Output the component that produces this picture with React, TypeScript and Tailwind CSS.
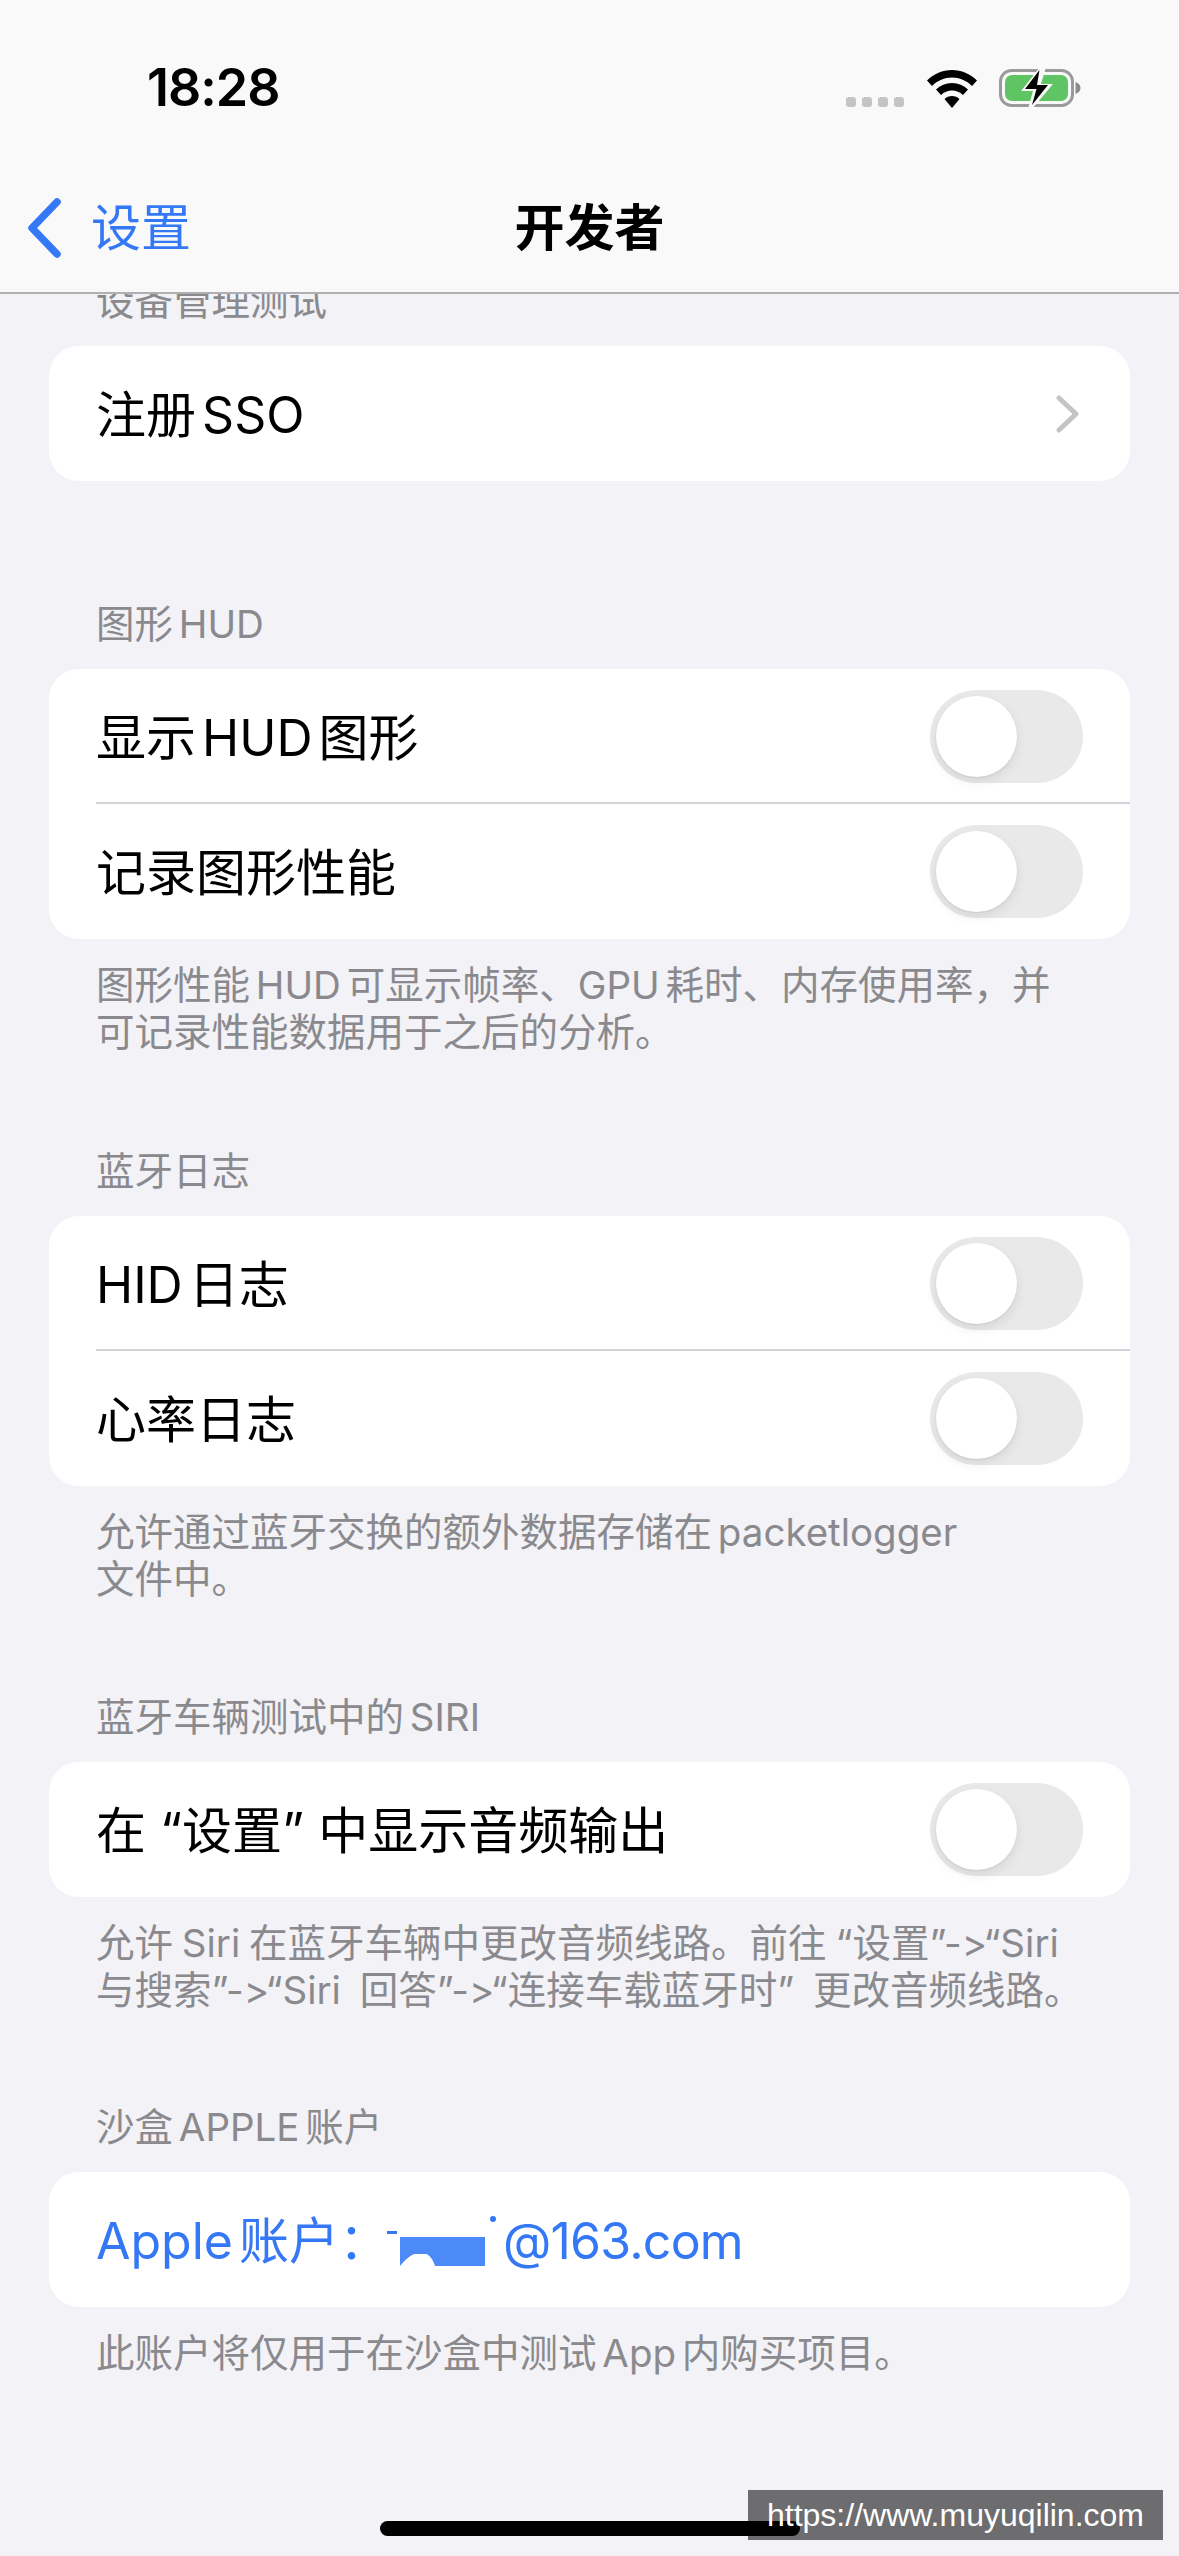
import * as React from "react";

const Toggle = () => (
  <div className="w-[153px] h-[93px] rounded-full bg-[#e9e9ea] p-[6px] shrink-0">
    <div className="w-[81px] h-[81px] rounded-full bg-white shadow-[0_5px_12px_rgba(0,0,0,0.08),0_1px_2px_rgba(0,0,0,0.08)]" />
  </div>
);

const Row = ({ label, divider }: { label: React.ReactNode; divider?: boolean }) => (
  <div className="h-[135px] pl-[47px] pr-[47px] flex items-center justify-between relative">
    <span className="pt-[3px] text-[50px] leading-none text-black [word-spacing:-8px]">{label}</span>
    <Toggle />
    {divider && <div className="absolute left-[47px] right-0 bottom-0 h-[2px] bg-[#d4d4d6]" />}
  </div>
);

const Header = ({ children }: { children: React.ReactNode }) => (
  <div className="px-[96px] pb-[21px] text-[38.5px] leading-[47px] text-[#8a8a8e] [word-spacing:-5px]">{children}</div>
);

const Footer = ({ children }: { children: React.ReactNode }) => (
  <div className="px-[96px] pt-[23px] text-[38.5px] leading-[47px] text-[#8a8a8e] whitespace-nowrap [word-spacing:-5px] [font-variant-ligatures:none] [font-feature-settings:'calt'_0]">
    {children}
  </div>
);

const Card = ({ children }: { children: React.ReactNode }) => (
  <div className="mx-[49px] rounded-[30px] bg-white overflow-hidden">{children}</div>
);

const StatusIcons = () => (
  <div className="flex items-end">
    <div className="flex gap-[6px] mb-[2px] mr-[23px]">
      <div className="w-[10px] h-[10px] rounded-[3px] bg-[#c4c4c4]" />
      <div className="w-[10px] h-[10px] rounded-[3px] bg-[#c4c4c4]" />
      <div className="w-[10px] h-[10px] rounded-[3px] bg-[#c4c4c4]" />
      <div className="w-[10px] h-[10px] rounded-[3px] bg-[#c4c4c4]" />
    </div>
    <svg width="50" height="38" viewBox="0 0 50 38" className="mb-[1px] mr-[22px]">
      <path d="M25 0C15.500 0 7 3.700 0 10.500l5 5.500C10.500 10.500 17.500 7.500 25 7.500s14.500 3 20 8.500l5-5.500C43 3.700 34.500 0 25 0z" fill="#000" />
      <path d="M25 13c-6.300 0-11.700 2.300-16 6.500l5 5.500c3-3 6.800-4.500 11-4.500s8 1.500 11 4.500l5-5.500C36.700 15.300 31.300 13 25 13z" fill="#000" />
      <path d="M25 26c-3 0-5.500 1-7.500 3L25 38l7.500-9c-2-2-4.500-3-7.500-3z" fill="#000" />
    </svg>
    <svg width="82" height="42" viewBox="0 0 82 42">
      <rect x="1.500" y="3.500" width="72" height="35" rx="11" fill="none" stroke="#9a9a9a" strokeWidth="3" />
      <rect x="6" y="8" width="63" height="26" rx="7" fill="#5fc463" />
      <path d="M76.500 15c3 1 5 3.200 5 6s-2 5-5 6z" fill="#8c8c8c" />
      <path d="M41 0L22 24h12l-5 18 4 0 21-25H42l5-17z" fill="#f9f9f9" />
      <path d="M40.500 3L26 22h11.500l-4.500 16 16-20H38z" fill="#000" />
    </svg>
  </div>
);

export default function App() {
  return (
    <div className="relative h-[2556px] w-[1179px] overflow-hidden bg-[#f2f2f7] font-['Inter','Noto_Sans_CJK_SC',sans-serif]">
      <div className="h-[294px] bg-[#f9f9f9] border-b-2 border-[#b0b0b2]">
        <div className="h-[176px] pl-[147px] pr-[98px] flex items-center justify-between">
          <span className="text-[52px] font-semibold leading-none text-black tracking-[-1px]">18:28</span>
          <StatusIcons />
        </div>
        <div className="h-[104px] grid grid-cols-[1fr_auto_1fr] items-center">
          <div className="flex items-center pl-[26px] text-[#3478f6]">
            <svg width="38" height="60" viewBox="0 0 38 60" className="mr-[27px]">
              <path d="M31 4L6 30l25 26" fill="none" stroke="#3478f6" strokeWidth="7.500" strokeLinecap="round" strokeLinejoin="round" />
            </svg>
            <span className="text-[50px] leading-none">设置</span>
          </div>
          <span className="text-[50px] font-semibold leading-none text-black">开发者</span>
          <div />
        </div>
      </div>

      <main className="h-[2262px] overflow-hidden">
        <div className="-mt-[16px]">
          <Header>设备管理测试</Header>
          <Card>
            <div className="h-[135px] pl-[47px] pr-[50px] flex items-center justify-between">
              <span className="pt-[3px] text-[50px] leading-none text-black [word-spacing:-8px]">注册 SSO</span>
              <svg width="24" height="38" viewBox="0 0 24 38">
                <path d="M3 3l17 16L3 35" fill="none" stroke="#c4c4c7" strokeWidth="5" strokeLinecap="round" strokeLinejoin="round" />
              </svg>
            </div>
          </Card>
        </div>

        <div className="mt-[120px]">
          <Header>图形 HUD</Header>
          <Card>
            <Row label="显示 HUD 图形" divider />
            <Row label="记录图形性能" />
          </Card>
          <Footer>
            图形性能 HUD 可显示帧率、GPU 耗时、内存使用率，并
            <br />
            可记录性能数据用于之后的分析。
          </Footer>
        </div>

        <div className="mt-[92px]">
          <Header>蓝牙日志</Header>
          <Card>
            <Row label="HID 日志" divider />
            <Row label="心率日志" />
          </Card>
          <Footer>
            允许通过蓝牙交换的额外数据存储在 packetlogger
            <br />
            文件中。
          </Footer>
        </div>

        <div className="mt-[91px]">
          <Header>蓝牙车辆测试中的 SIRI</Header>
          <Card>
            <Row label={<span className="[word-spacing:0]">在 “设置” 中显示音频输出</span>} />
          </Card>
          <Footer>
            <span className="[word-spacing:-2px]">允许 Siri 在蓝牙车辆中更改音频线路。前往 “设置”-&gt;“Siri</span>
            <br />
            <span className="[word-spacing:8px]">与搜索”-&gt;“Siri 回答”-&gt;“连接车载蓝牙时” 更改音频线路。</span>
          </Footer>
        </div>

        <div className="mt-[90px]">
          <Header>沙盒 APPLE 账户</Header>
          <Card>
            <div className="h-[135px] pl-[47px] flex items-center text-[50px] leading-none text-[#3478f6] [word-spacing:-8px]">
              <span className="pt-[3px]">Apple 账户：</span>
              <svg width="118" height="70" viewBox="0 0 118 70" className="shrink-0 -ml-[4px] mt-[4px]">
                <rect x="2" y="24" width="10" height="3" fill="#3478f6" />
                <circle cx="108" cy="12" r="3" fill="#3478f6" />
                <path d="M15 30h85v29H50c-2-6-5-11-9-12H30c-5 1-10 6-15 12z" fill="#4c8bf7" />
              </svg>
              <span className="pt-[3px] tracking-[-0.8px]">@163.com</span>
            </div>
          </Card>
          <Footer>此账户将仅用于在沙盒中测试 App 内购买项目。</Footer>
        </div>
      </main>

      <div className="absolute left-[380px] top-[2521px] w-[420px] h-[15px] rounded-full bg-black" />
      <div className="absolute left-[748px] top-[2490px] w-[415px] h-[50px] bg-black/55 flex items-center justify-center text-[32px] leading-none text-white font-['Liberation_Sans',sans-serif]">
        https://www.muyuqilin.com
      </div>
    </div>
  );
}
